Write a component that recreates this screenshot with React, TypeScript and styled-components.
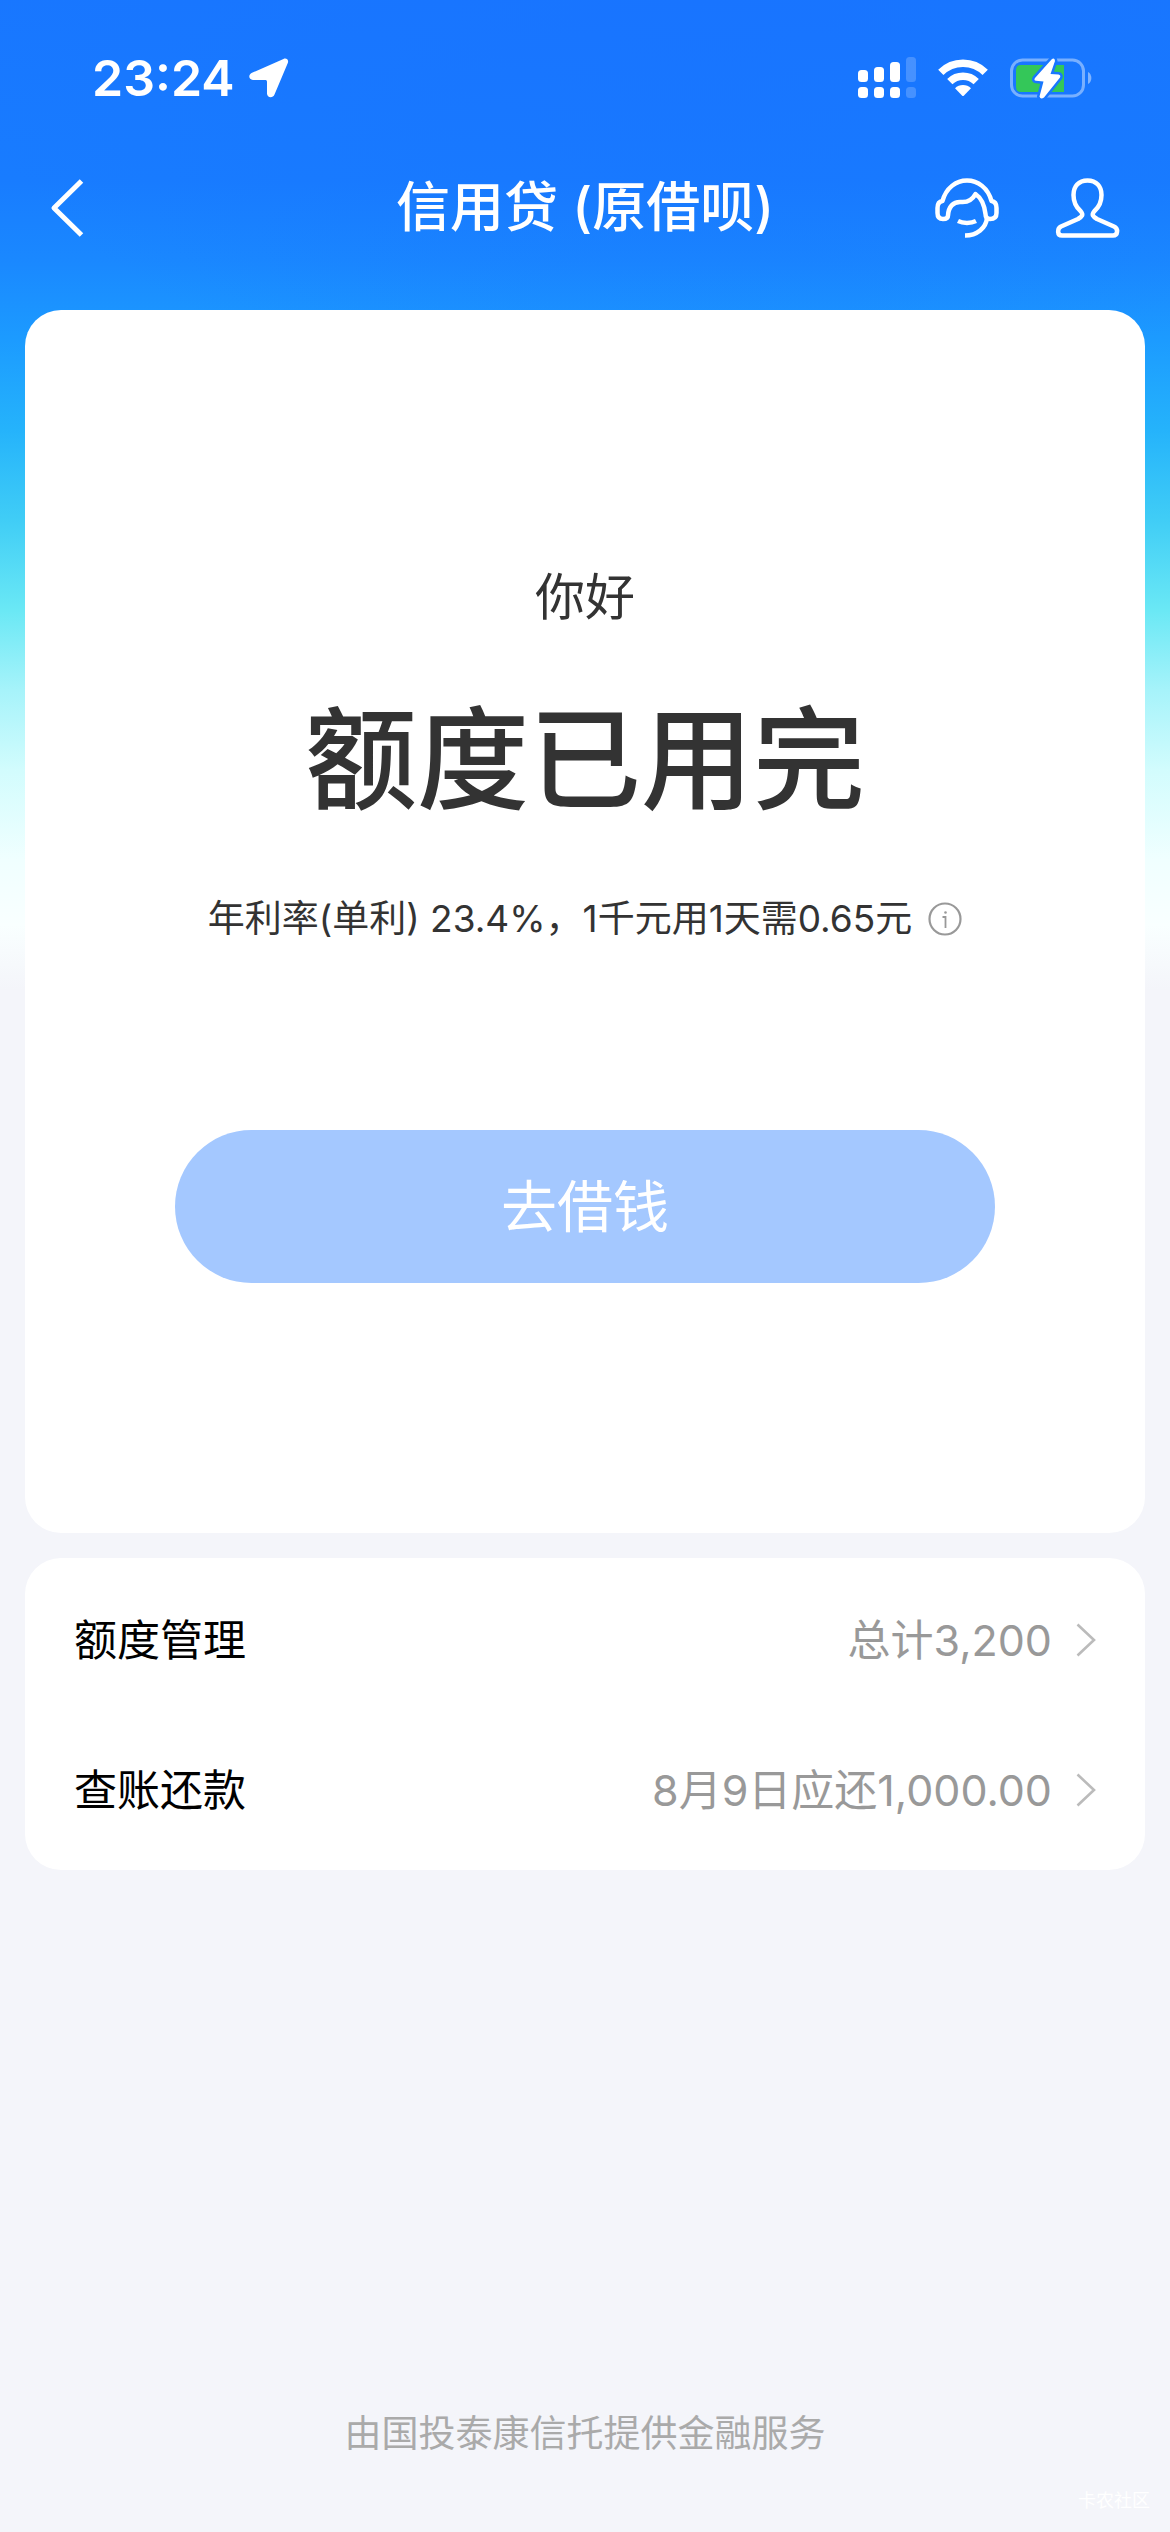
import React from "react";
import styled, { createGlobalStyle } from "styled-components";

const GlobalStyle = createGlobalStyle`
  *, *::before, *::after { box-sizing: border-box; }
  body {
    margin: 0;
    background: #f4f5fa;
    font-family: Inter, "Noto Sans CJK SC", sans-serif;
    color: #333;
  }
  button { font-family: inherit; border: 0; padding: 0; background: none; cursor: pointer; }
  svg { display: block; flex: none; }
`;

const Page = styled.div`
  position: relative;
  min-height: 100vh;
  display: flex;
  flex-direction: column;
  background:
    radial-gradient(ellipse 760px 420px at 60% 0, rgba(24, 114, 255, 0.6), rgba(24, 120, 255, 0)) no-repeat,
    linear-gradient(
      #1877ff 0,
      #187cff 180px,
      #1a88ff 260px,
      #1c9bff 340px,
      #25b3fb 430px,
      #40cdf6 520px,
      #6ae8f5 610px,
      #a6f3fa 690px,
      #d2fcfd 770px,
      #f0ffff 860px,
      #f9ffff 925px,
      #f4f5fa 990px
    ) no-repeat #f4f5fa;
`;

const StatusBar = styled.div`
  display: flex;
  align-items: center;
  justify-content: space-between;
  height: 156px;
  padding: 0 77px 0 92px;
  color: #fff;
`;

const StatusGroup = styled.div<{ $gap: number }>`
  display: flex;
  align-items: center;
  gap: ${(p) => p.$gap}px;
`;

const Clock = styled.time`
  font-size: 50px;
  line-height: 64px;
  font-weight: 600;
`;

const NavBar = styled.header`
  display: grid;
  grid-template-columns: 1fr auto 1fr;
  align-items: center;
  height: 104px;
  padding: 0 50px;
  color: #fff;
`;

const NavTitle = styled.h1`
  margin: 0;
  font-size: 54px;
  line-height: 80px;
  font-weight: 500;
  white-space: nowrap;
`;

const NavActions = styled.div`
  display: flex;
  justify-content: flex-end;
  gap: 56px;
`;

const IconButton = styled.button`
  display: flex;
  justify-self: start;
  color: inherit;
`;

const Content = styled.main`
  display: flex;
  flex-direction: column;
  gap: 25px;
  padding: 50px 25px 0;
`;

const Card = styled.section`
  border-radius: 36px;
  background: #fff;
`;

const QuotaCard = styled(Card)`
  display: flex;
  flex-direction: column;
  align-items: center;
  padding: 250px 150px;
`;

const Greeting = styled.p`
  margin: 0;
  font-size: 50px;
  line-height: 74px;
`;

const Headline = styled.h2`
  margin: 44px 0 0;
  font-size: 112px;
  line-height: 164px;
  font-weight: 500;
`;

const RateLine = styled.div`
  display: flex;
  align-items: center;
  gap: 16px;
  margin-top: 49px;
  font-size: 37px;
  line-height: 56px;
  white-space: nowrap;
`;

const InfoButton = styled(IconButton)`
  color: #999;
`;

const BorrowButton = styled.button`
  align-self: stretch;
  height: 153px;
  margin-top: 183px;
  border-radius: 77px;
  && { background: #a4c8ff; }
  color: #fff;
  font-size: 56px;
  line-height: 84px;
`;

const MenuCard = styled(Card)`
  display: flex;
  flex-direction: column;
  padding: 7px 0 5px;
`;

const MenuRow = styled.a`
  display: flex;
  align-items: center;
  height: 150px;
  padding: 0 49px;
  font-size: 43px;
  line-height: 64px;
  color: #000;
  text-decoration: none;
`;

const MenuLabel = styled.span`
  flex: 1;
`;

const MenuValue = styled.span`
  margin-right: 24px;
  color: #999;
`;

const Footer = styled.footer`
  margin-top: auto;
  padding-bottom: 70px;
  text-align: center;
  font-size: 37px;
  line-height: 56px;
  color: #aaa;
`;

const Watermark = styled.span`
  position: absolute;
  right: 20px;
  bottom: 16px;
  font-size: 18px;
  line-height: 30px;
  color: #fff;
`;

const LocationIcon = () => (
  <svg width="40" height="40" viewBox="0 0 40 40" fill="#fff" aria-hidden="true">
    <path d="M34.500.9C37.500-.3 40 2 38.800 5L25.500 36.500C24 40.500 18 40 18 35.500V24C18 22.500 17.500 22 16 22H4C-.5 22-1 16.500 3 14.800Z" />
  </svg>
);

const SignalIcon = () => (
  <svg width="58" height="42" viewBox="0 0 58 42" fill="#fff" aria-hidden="true">
    <rect x="0" y="13" width="10" height="12" rx="3.500" />
    <rect x="16" y="10" width="10" height="15" rx="3.500" />
    <rect x="32" y="5" width="10" height="20" rx="3.500" />
    <rect x="48" y="0" width="10" height="25" rx="3.500" opacity=".2" />
    <rect x="0" y="30" width="10" height="11" rx="3.500" />
    <rect x="16" y="30" width="10" height="11" rx="3.500" />
    <rect x="32" y="30" width="10" height="11" rx="3.500" />
    <rect x="48" y="30" width="10" height="11" rx="3.500" opacity=".2" />
  </svg>
);

const WifiIcon = () => (
  <svg width="50" height="38" viewBox="0 0 50 38" aria-hidden="true">
    <g fill="none" stroke="#fff" strokeWidth="7.500">
      <path d="M2.800 13.300A31.500 31.500 0 0 1 47.200 13.300" />
      <path d="M11.800 22.700A18.800 18.800 0 0 1 38.200 22.700" />
    </g>
    <path fill="#fff" d="M17 29.200A11.500 11.500 0 0 1 33 29.200L26 36.500Q25 37.500 24 36.500Z" />
  </svg>
);

const BatteryIcon = () => (
  <svg width="83" height="44" viewBox="0 0 83 44" aria-hidden="true">
    <rect x="1.500" y="4" width="72" height="36" rx="11" fill="none" stroke="#fff" strokeOpacity=".42" strokeWidth="3" />
    <path d="M78 16C82.500 18 82.500 26 78 28Z" fill="#fff" fillOpacity=".45" />
    <path d="M11 9H54V36H11Q6 36 6 31V14Q6 9 11 9Z" fill="#34c759" />
    <path
      d="M41.500 3.500L25 22Q23.500 24.500 26 24.800L33.500 25.500L29.500 40.500Q30.500 44 34 41.500L50 21.500Q51 19 48.500 18.500L40.500 18L45 5Q44.500 1 41.500 3.500Z"
      fill="#fff"
      stroke="#1877ff"
      strokeWidth="5"
      paintOrder="stroke"
    />
  </svg>
);

const BackIcon = () => (
  <svg width="34" height="58" viewBox="0 0 34 58" fill="none" stroke="#fff" strokeWidth="5" aria-hidden="true">
    <path d="M31.500 2L4 29L31.500 56" strokeLinejoin="round" />
  </svg>
);

const ServiceIcon = () => (
  <svg width="64" height="60" viewBox="0 0 64 60" fill="none" stroke="#fff" strokeWidth="4.500" aria-hidden="true">
    <path strokeLinejoin="round" d="M13 37.500C13.500 29 18 23.500 26 24C32 24.500 37 22.500 40.500 16C46.500 20 49.500 28 50.500 36C50.500 39.500 52 41 55 41C59.500 41 61.500 39 61.500 35V30C61.500 26 60 23.500 56.500 23C53 10 43 2.500 32 2.500C21 2.500 11 10 7.500 23C4 23.500 2.500 26 2.500 30V35C2.500 39 4 41 8 41C11.500 41 13 40 13 37.500Z" />
    <path d="M52 40C51 50 42 57.500 30 57.500M23 43C28 45.500 36 45.500 41 43" />
  </svg>
);

const UserIcon = () => (
  <svg width="65" height="60" viewBox="0 0 65 60" fill="none" stroke="#fff" strokeWidth="4.500" aria-hidden="true">
    <path strokeLinejoin="round" d="M32.500 2.500C23.500 2.500 18.500 8.500 18.500 17C18.500 25 21.500 29.500 25.500 33C29 37 27 38.500 23 41L6 48.500C2 50.500 2 57.500 7 57.500H58C63 57.500 63.500 50.500 59 48.500L42 41C38 38.500 36 37 39.500 33C43.500 29.500 46.500 25 46.500 17C46.500 8.500 41.500 2.500 32.500 2.500Z" />
  </svg>
);

const InfoIcon = () => (
  <svg width="34" height="34" viewBox="0 0 34 34" fill="none" stroke="currentColor" aria-hidden="true">
    <circle cx="17" cy="17" r="15.500" strokeWidth="2.200" />
    <path d="M14.500 15H17.500V26" strokeWidth="1.800" />
    <circle cx="17.500" cy="10.500" r="1.300" fill="currentColor" stroke="none" />
  </svg>
);

const ChevronIcon = () => (
  <svg width="20" height="34" viewBox="0 0 20 34" fill="none" stroke="#bbb" strokeWidth="2.600" aria-hidden="true">
    <path d="M1.500 1.500L18 17L1.500 32.500" />
  </svg>
);

const menu = [
  { label: "额度管理", value: "总计3,200" },
  { label: "查账还款", value: "8月9日应还1,000.00" },
];

export default function App() {
  return (
    <>
      <GlobalStyle />
      <Page>
        <StatusBar>
          <StatusGroup $gap={14}>
            <Clock>23:24</Clock>
            <LocationIcon />
          </StatusGroup>
          <StatusGroup $gap={22}>
            <SignalIcon />
            <WifiIcon />
            <BatteryIcon />
          </StatusGroup>
        </StatusBar>
        <NavBar>
          <IconButton type="button" aria-label="返回">
            <BackIcon />
          </IconButton>
          <NavTitle>信用贷 (原借呗)</NavTitle>
          <NavActions>
            <IconButton type="button" aria-label="客服">
              <ServiceIcon />
            </IconButton>
            <IconButton type="button" aria-label="我的">
              <UserIcon />
            </IconButton>
          </NavActions>
        </NavBar>
        <Content>
          <QuotaCard>
            <Greeting>你好</Greeting>
            <Headline>额度已用完</Headline>
            <RateLine>
              <span>年利率(单利) 23.4%，1千元用1天需0.65元</span>
              <InfoButton type="button" aria-label="利率说明">
                <InfoIcon />
              </InfoButton>
            </RateLine>
            <BorrowButton type="button">去借钱</BorrowButton>
          </QuotaCard>
          <MenuCard>
            {menu.map((item) => (
              <MenuRow href="#" key={item.label}>
                <MenuLabel>{item.label}</MenuLabel>
                <MenuValue>{item.value}</MenuValue>
                <ChevronIcon />
              </MenuRow>
            ))}
          </MenuCard>
        </Content>
        <Footer>由国投泰康信托提供金融服务</Footer>
        <Watermark>卡农社区</Watermark>
      </Page>
    </>
  );
}
